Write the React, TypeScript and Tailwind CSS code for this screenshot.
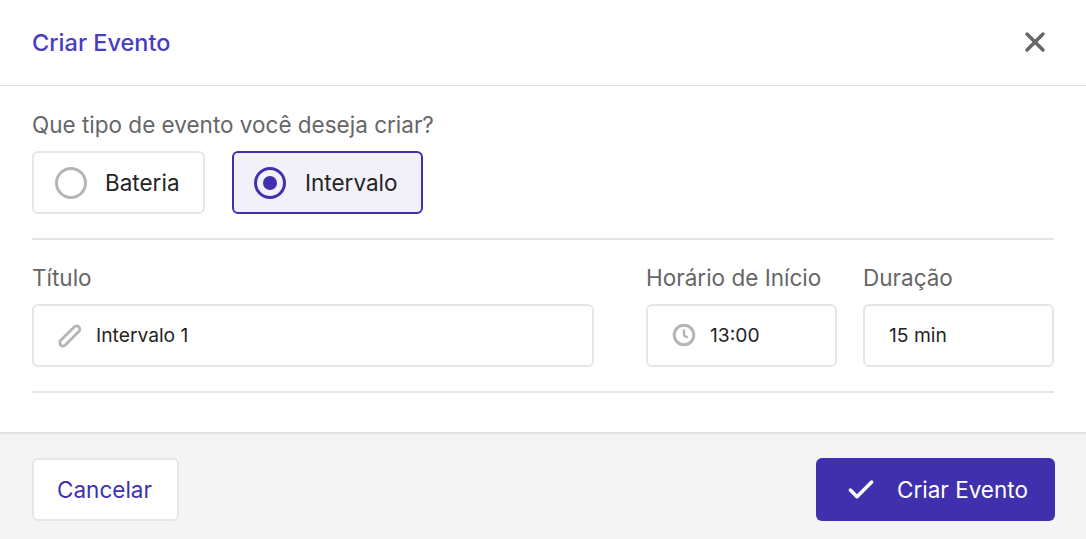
import { Check, X } from "lucide-react";

const font = { fontFamily: "Inter, sans-serif" };

const Pencil = () => (
  <svg width="24" height="24" viewBox="0 0 24 24" fill="none" className="shrink-0">
    <path
      d="M3.8 22 L2 20.2 L2 17 L16.2 3 C17.6 1.6 19.6 1.6 20.9 2.9 C22.2 4.2 22.2 6.2 20.8 7.6 L6.8 21.6 L3.8 22 Z"
      stroke="#b5b5b5"
      strokeWidth="2.8"
      strokeLinejoin="round"
    />
  </svg>
);

const Clock = () => (
  <svg width="24" height="24" viewBox="0 0 24 24" fill="none" className="shrink-0 mb-[1px]">
    <circle cx="12" cy="12" r="9.8" stroke="#b5b5b5" strokeWidth="3" />
    <path d="M12 6.5 V12.6 L15.8 14.6" stroke="#b5b5b5" strokeWidth="2.4" />
  </svg>
);

export default function App() {
  return (
    <div className="h-[539px] w-[1086px] flex flex-col bg-white" style={font}>
      <header className="h-[86px] shrink-0 flex items-center justify-between border-b border-[#e2e2e2] pl-8 pr-[32px]">
        <h1 className="text-[23.5px] font-medium text-[#4a3cc0]">Criar Evento</h1>
        <X size={32} strokeWidth={2.6} color="#666666" className="mr-[3px] mb-[2px]" />
      </header>

      <main className="flex-1 px-8 flex flex-col">
        <p className="mt-[23px] text-[22.5px] leading-[32px] text-[#666666]">Que tipo de evento você deseja criar?</p>
        <div className="mt-[10px] flex gap-[27px]">
          <div className="h-[63px] w-[173px] flex items-center rounded-[6px] border-2 border-[#e6e6e6] pl-[21px]">
            <span className="h-[32px] w-[32px] rounded-full border-[3px] border-[#b5b5b5]" />
            <span className="ml-[18px] text-[22.5px] text-[#242424]">Bateria</span>
          </div>
          <div className="h-[63px] w-[191px] flex items-center rounded-[6px] border-2 border-[#4030ae] bg-[#f2f1fa] pl-[20px]">
            <span className="h-[32px] w-[32px] rounded-full border-[3px] border-[#4030ae] flex items-center justify-center">
              <span className="h-[14px] w-[14px] rounded-full bg-[#4030ae]" />
            </span>
            <span className="ml-[19px] text-[22.5px] text-[#242424]">Intervalo</span>
          </div>
        </div>
        <div className="mt-[24px] h-[2px] bg-[#e6e6e6]" />

        <div className="mt-[22px] flex">
          <div className="w-[562px]">
            <label className="block text-[22.5px] leading-[32px] text-[#666666]">Título</label>
            <div className="mt-[10px] h-[63px] flex items-center rounded-[6px] border-2 border-[#e6e6e6] pl-[24px]">
              <Pencil />
              <span className="ml-[14px] text-[19.25px] text-[#242424]">Intervalo 1</span>
            </div>
          </div>
          <div className="ml-[52px] w-[191px]">
            <label className="block text-[22.5px] leading-[32px] text-[#666666]">Horário de Início</label>
            <div className="mt-[10px] h-[63px] flex items-center rounded-[6px] border-2 border-[#e6e6e6] pl-[24px]">
              <Clock />
              <span className="ml-[14px] text-[19.25px] text-[#242424]">13:00</span>
            </div>
          </div>
          <div className="ml-[26px] w-[191px]">
            <label className="block text-[22.5px] leading-[32px] text-[#666666]">Duração</label>
            <div className="mt-[10px] h-[63px] flex items-center rounded-[6px] border-2 border-[#e6e6e6] pl-[24px]">
              <span className="text-[19.25px] text-[#242424]">15 min</span>
            </div>
          </div>
        </div>
        <div className="mt-[24px] h-[2px] bg-[#e6e6e6]" />
      </main>

      <footer className="h-[107px] shrink-0 flex items-start justify-between border-t-2 border-[#e2e2e2] bg-[#f4f4f4] pl-8 pr-[31px] pt-[24px]">
        <button className="h-[63px] w-[147px] rounded-[6px] border-2 border-[#e6e6e6] bg-white pr-[2px] text-[22.5px] text-[#4030ae]">
          Cancelar
        </button>
        <button className="h-[63px] w-[239px] rounded-[6px] bg-[#4030ae] flex items-center pl-[29px] text-[22.5px] text-white">
          <Check size={32} strokeWidth={2.6} />
          <span className="ml-[20px]">Criar Evento</span>
        </button>
      </footer>
    </div>
  );
}
